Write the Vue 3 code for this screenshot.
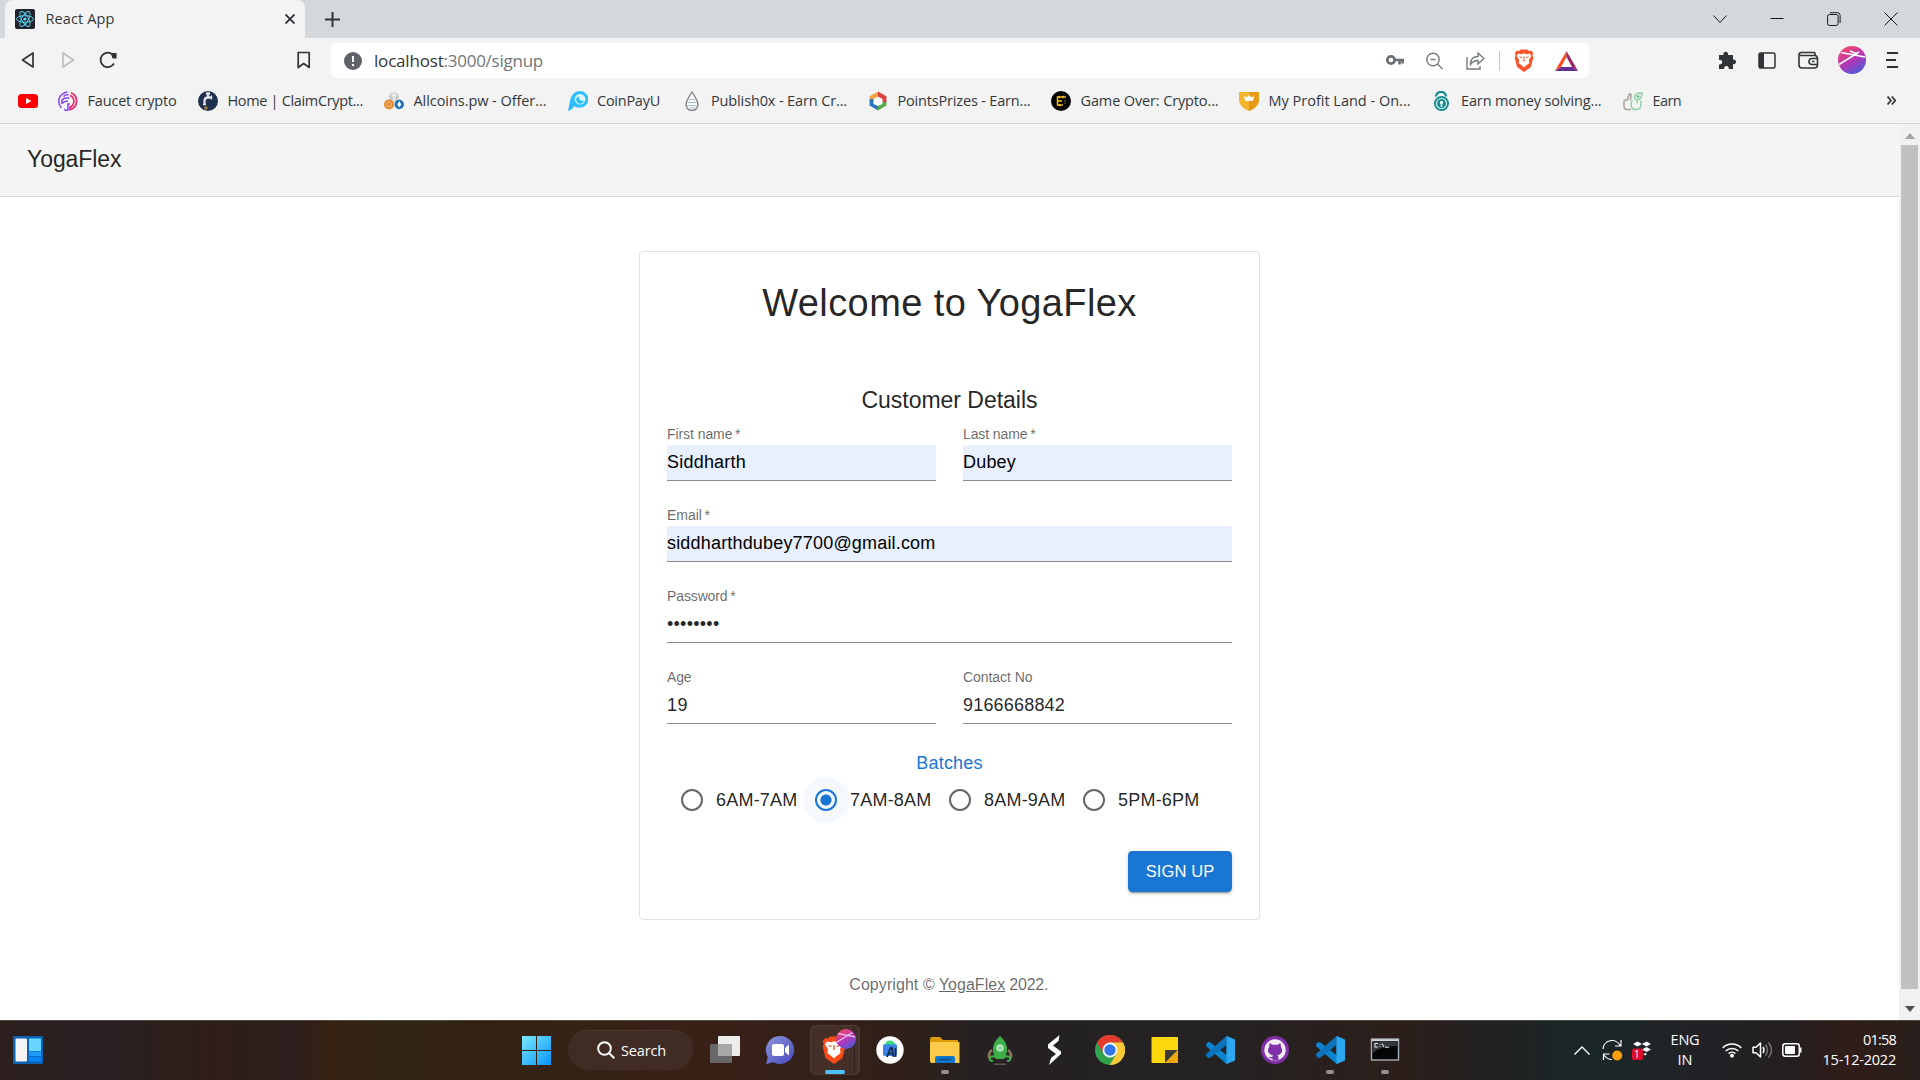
<script setup>
const vFit = {
  mounted(el, { value }) {
    const natural = el.getBoundingClientRect().width
    el.style.letterSpacing = (value - natural) / el.textContent.length + 'px'
  },
}

const bookmarks = [
  { label: '', w: 0, end: 20, art: '<rect x="0" y="3" width="20" height="14" rx="3.5" fill="#f00"/><path d="M8 7l5.4 3L8 13z" fill="#fff"/>' },
  { label: 'Faucet crypto', w: 89, end: 21.5, art: '<path d="M9.500 1Q3 2 1 8q-1 5 2.500 9M6 18.500q2 1 4 .5v-6h2M5.500 5.500Q7 3.800 9.500 3.800h1M4 9q1.500-2 4.500-2h3M4 12.500q1.500-2.200 4.500-2.200h1.500M4 9v4" fill="none" stroke="#8446f5" stroke-width="1.500"/><path d="M13 1.800A9 9 0 0 1 12 18.800V16A6.200 6.200 0 0 0 12 4.500" fill="none" stroke="#f01f66" stroke-width="1.600"/>' },
  { label: 'Home | ClaimCrypt...', w: 135.5, end: 21, art: '<circle cx="10" cy="10" r="10" fill="#20304f"/><path d="M10 2.500V6M8 2.500h4M6.500 14V10.500q0-4 3.500-4h3.500" stroke="#dfe5ec" stroke-width="2.300" fill="none"/><path d="M13.500 4.500v4M5 13.500h3" stroke="#dfe5ec" stroke-width="1.300"/><circle cx="8" cy="17" r="1.700" fill="#a5843a"/>' },
  { label: 'Allcoins.pw - Offer...', w: 133, end: 21, art: '<circle cx="10" cy="6.500" r="5" fill="#ccc"/><path d="M10 3v7M8 5l2-2 2 2" stroke="#f4f4f4" stroke-width="1.300" fill="none"/><circle cx="5" cy="13.500" r="5" fill="#e48a32"/><circle cx="5" cy="13.500" r="2.400" fill="none" stroke="#f6c28e"/><circle cx="15.300" cy="13.500" r="4.700" fill="#1e70b8"/><path d="M15.300 10l2 3.500-2 3-2-3z" fill="#fff"/>' },
  { label: 'CoinPayU', w: 63, end: 21.5, art: '<path d="M0 20l2-10Q4 0 12 0a8.300 8.300 0 0 1 0 16.600Q8.500 17 6 15q-1.500 4-6 5z" fill="#2bc0fb"/><circle cx="12" cy="8.200" r="5.300" fill="#e4f7ff"/><path d="M10.500 5a4 4 0 1 0 5.500 4.500Q11 11 10.500 5z" fill="#2bc0fb"/>' },
  { label: 'Publish0x - Earn Cr...', w: 136, end: 21, art: '<path d="M10 1Q4 10 4 13.500a6 6 0 0 0 12 0Q16 10 10 1z" fill="#f8f8f8" stroke="#777d80" stroke-width="1.300"/><path d="M7 8.500h6M5 11.500h10M5 14.500h10M8 17h5" stroke="#a7c3d2"/>' },
  { label: 'PointsPrizes - Earn...', w: 133, end: 20.5, art: '<path d="M10 0l9 5v10l-9 5-9-5V5z" fill="#fff"/><path d="M10 .5v5L5.500 8H1.500V5.300z" fill="#f0a43c"/><path d="M10 .5v5L14.500 8v3h4V5.300z" fill="#d94242"/><path d="M18.500 11h-4v2L10 15v4.500l8.500-5z" fill="#57ab46"/><path d="M1.500 8h4v5l4.500 2v4.500l-8.500-5z" fill="#2b76bb"/>' },
  { label: 'Game Over: Crypto...', w: 138, end: 20.5, art: '<circle cx="10" cy="10" r="10" fill="#000"/><path d="M15 6H6.500v8H12M6.500 10H11M8.500 4.800v2.500M12 4.800v2.500M8.500 13v2.200" fill="none" stroke="#f5bd1c" stroke-width="1.500"/><path d="M14 9v5" stroke="#695010" stroke-width="1.500" stroke-dasharray="1.500 1"/>' },
  { label: 'My Profit Land - On...', w: 142, end: 21, art: '<path d="M0 1q10 0 20 0v8q0 7-10 11Q0 16 0 9z" fill="#f5b52b"/><path d="M10 1h10v8q0 7-10 11z" fill="#e59b16"/><path d="M5 5l2.500 1.500L10 4l2.500 2.500L15 5l-1 5H6z" fill="#fff"/>' },
  { label: 'Earn money solving...', w: 140.5, end: 21.5, art: '<path d="M4 5.500Q4.500 1 9 1t5 4.500" fill="none" stroke="#168b8f" stroke-width="2.200"/><circle cx="9.500" cy="12.500" r="7.500" fill="#168b8f"/><circle cx="9.500" cy="12.500" r="5" fill="none" stroke="#e6f5f5" stroke-width="1.100"/><circle cx="9.500" cy="11.400" r="1.700" fill="#e6f5f5"/><path d="M8.700 12h1.600v4H8.700z" fill="#e6f5f5"/>' },
  { label: 'Earn', w: 28.5, end: 0, art: '<path d="M1 10q2-2 3.500-1L6 3.500q2-2 2 1.500l-.500 4M1 10v6q1 3 4 2.500h3" fill="none" stroke="#a9a29c" stroke-width="1.500"/><path d="M19 2q-6-.500-7.500 3.500 0 3.500 3 3.500Q19 8 19 2zM9.500 9q-2 2-1 7 1 3 5 2.500 4 0 4.500-5V9.500M14 9v3" fill="none" stroke="#8fd0a8" stroke-width="1.500"/><circle cx="15" cy="5.500" r="1.500" fill="#6dbf8e"/>' },
]

const vscode = '<path d="M21.500 1L29 4.500v21L21.500 29 1.500 11.500q-1.500-1.500 0-3L3 7.300q1.200-.8 2.500.2L21.500 20z" fill="#0a84d0"/><path d="M21.500 1L1.500 18.500q-1.500 1.500 0 3l1.500 1.200q1.200.8 2.500-.2L21.500 10z" fill="#0b72bb"/><path d="M21.500 1L30 4.500v21L21.500 29z" fill="#2aa7ee"/>'
const lion = 'M10 .5h8l2 2 3-.3 2.300 3-1 2.500 1 3-2.800 11.300L14 28l-8.500-6L2.700 10.700l1-3-1-2.500 2.300-3 3 .3z'
const face = 'M7 5.500l4 .800 3-1 3 1 4-.800 2 3-3 4.500.5 4-3 2.500-3.500 1-3.500-1-3-2.500.5-4L5 8.500z'

const apps = [
  { name: 'task-view', art: '<rect x="0" y="9" width="22" height="19" rx="1.500" fill="#686868"/><rect x="8" y="1" width="22" height="20" rx="1" fill="#ededed"/><rect x="8" y="9" width="14" height="12" fill="#a8a8a8"/>' },
  { name: 'chat', art: '<path d="M15 1a14 14 0 1 1-6.500 26.300L1 29l1.800-7A14 14 0 0 1 15 1z" fill="url(#chatFill)"/><rect x="7" y="9" width="12" height="12" rx="2" fill="#fff"/><path d="M20 13l4-3.500v11L20 17z" fill="#fff"/>' },
  { name: 'brave', active: true, art: `<path d="${lion}" fill="#fb4b1a"/><path d="${face}M12 13h4l-2 4z" fill="#fff"/><path d="M11 19.500l3-1 3 1-3 3z" fill="#fff"/><path d="M8.500 9.500l3 1M19.500 9.500l-3 1M14 9v5" stroke="#fb4b1a" stroke-width="1.300"/>` },
  { name: 'android-studio', art: '<circle cx="15" cy="15" r="13.700" fill="#fff"/><rect x="8" y="9" width="14" height="12" rx="2" fill="#3b82e8"/><path d="M10 9.500a5 4 0 0 1 10 0z" fill="#3ddc84"/><path d="M12 22l3.500-9h1.500l1.500 9M13.500 18.500h4M20.500 13v9" fill="none" stroke="#10253f" stroke-width="1.700"/>' },
  { name: 'files', run: true, art: '<path d="M0 4q0-2 2-2h8l3 3h15v6H0z" fill="#dd9b07"/><path d="M0 8q0-1 1-1h28.500v21H2q-2 0-2-2z" fill="#fdcb49"/><path d="M5 28v-5q0-2 2-2h16q2 0 2 2v5z" fill="#1277c9"/><path d="M9 24.500h12" stroke="#0b4c86" stroke-width="1.500"/>' },
  { name: 'rocket', art: '<path d="M7 15Q2 19 5 24M23 15q5 4 2 9" fill="none" stroke="#8b775c" stroke-width="2.500"/><path d="M15 1Q8 7 8 14q0 6 3 10h8q3-4 3-10 0-7-7-13z" fill="#3eaf48"/><circle cx="15" cy="13" r="3.200" fill="#92d8a5" stroke="#e1f5e5"/><path d="M10 22q-4-2-5 1t3 3M20 22q4-2 5 1t-3 3" fill="none" stroke="#3eaf48" stroke-width="2"/><path d="M9 29.200h12" stroke="#625750" stroke-width="1.500"/>' },
  { name: 'slash', art: '<path d="M19.500 0L8 9.500V13l8 6-5 4-2 7 12-11v-2.500l-8-6 5.500-4.500z" fill="#fff"/>' },
  { name: 'chrome', art: '<circle cx="15" cy="15" r="15" fill="#2ea44f"/><path d="M2 7.500A15 15 0 0 1 28 7.500H15L8.500 18.700z" fill="#e33b2e"/><path d="M28 7.500A15 15 0 0 1 14.700 30l6.800-11.200L15 7.500z" fill="#fcc934"/><circle cx="15" cy="15" r="7.400" fill="#fff"/><circle cx="15" cy="15" r="5.700" fill="#3076e8"/>' },
  { name: 'notes', art: '<rect x="1.500" y="2" width="26.500" height="26" rx="1" fill="#fed80c"/><path d="M15 28V15h13z" fill="#3f3a36"/><path d="M15 28L28 15v13z" fill="#f1a80d"/>' },
  { name: 'vscode', art: vscode },
  { name: 'github', art: '<circle cx="15" cy="15" r="14" fill="#8030a8"/><circle cx="15" cy="15" r="10.700" fill="#f2ecf5"/><path d="M9.500 8l3 1.700h5l3-1.700.500 4q3 5-1.500 7.500l-2 .800q1 1 1 2.500v2.800h-6v-2q-3 0-4-2.200 2 1.200 4 .4l.500-1.500q-5-1-5-5 0-2 1.200-3.300z" fill="#8030a8"/>' },
  { name: 'vscode-2', run: true, art: vscode },
  { name: 'terminal', run: true, art: '<rect x="1.500" y="4" width="27" height="21" fill="#050505" stroke="#a5adb2" stroke-width="1.400"/><path d="M1.500 5.200h27" stroke="#d0d6da" stroke-width="2"/><path d="M2.500 7h25v4Q10 11 3 18z" fill="#34383a"/><path d="M8 8.500H5v3.500h3M10 9.200v.8M10 11.200v.8M12 8.500l2 3.500M15 12.200h4" fill="none" stroke="#dce1e3" stroke-width="1.100"/>' },
]

const fieldRows = [
  [{ label: 'First name\u2009*', lw: 73.5, value: 'Siddharth', w: 79, filled: true }, { label: 'Last name\u2009*', lw: 72.5, value: 'Dubey', w: 53, filled: true }],
  [{ label: 'Email\u2009*', lw: 43, value: 'siddharthdubey7700@gmail.com', w: 268.5, filled: true }],
  [{ label: 'Password\u2009*', lw: 68.5, value: '••••••••', w: 52.5 }],
  [{ label: 'Age', lw: 24.5, value: '19', w: 21 }, { label: 'Contact No', lw: 69.5, value: '9166668842', w: 102 }],
]
const batches = ['6AM-7AM', '7AM-8AM', '8AM-9AM', '5PM-6PM']
const chosen = '7AM-8AM'
</script>

<template>
  <div class="desktop">
    <svg class="defs" width="0" height="0">
      <defs>
        <linearGradient id="chatFill" x1="0" y1="0" x2="1" y2="1"><stop offset="0" stop-color="#8d97dd" /><stop offset="1" stop-color="#4747ba" /></linearGradient>
        <linearGradient id="orb" x1=".2" y1="0" x2=".8" y2="1"><stop offset="0" stop-color="#f64a68" /><stop offset=".5" stop-color="#b636b4" /><stop offset="1" stop-color="#425de0" /></linearGradient>
        <linearGradient id="winFill" gradientUnits="userSpaceOnUse" x1="0" y1="0" x2="29" y2="29"><stop offset="0" stop-color="#79e7ff" /><stop offset="1" stop-color="#0894f8" /></linearGradient>
      </defs>
    </svg>

    <header class="tabs">
      <div class="tab">
        <svg width="20" height="20" viewBox="0 0 20 20"><rect width="20" height="20" rx="2" fill="#20232a" /><g fill="none" stroke="#61dafb" stroke-width=".9"><ellipse cx="10" cy="10" rx="8.500" ry="3.300" /><ellipse cx="10" cy="10" rx="8.500" ry="3.300" transform="rotate(60 10 10)" /><ellipse cx="10" cy="10" rx="8.500" ry="3.300" transform="rotate(120 10 10)" /></g><circle cx="10" cy="10" r="1.600" fill="#61dafb" /></svg>
        <span class="tab-title"><span v-fit="69">React App</span></span>
        <svg class="tab-close" width="10" height="10" viewBox="0 0 10 10"><path d="M.5.5l9 9M9.500.5l-9 9" stroke="#2b2f33" stroke-width="1.800" /></svg>
      </div>
      <svg class="new-tab" width="15" height="15" viewBox="0 0 15 15"><path d="M7.500 0v15M0 7.500h15" stroke="#303437" stroke-width="2" /></svg>
      <div class="window-buttons">
        <svg width="14" height="14" viewBox="0 0 14 14"><path d="M.5 3.500l6.500 7 6.500-7" /></svg>
        <svg width="14" height="14" viewBox="0 0 14 14"><path d="M.5 6.500h13" /></svg>
        <svg width="14" height="14" viewBox="0 0 14 14"><rect x=".6" y="2.500" width="10.500" height="11" rx="2" /><path d="M3 .7h7.500q2.600 0 2.600 2.600V11" /></svg>
        <svg width="14" height="14" viewBox="0 0 14 14"><path d="M.5.5l13 13M13.500.5l-13 13" /></svg>
      </div>
    </header>

    <nav class="toolbar">
      <div class="nav-left">
        <svg class="back" width="14" height="18" viewBox="0 0 14 18"><path d="M12 2v14L1.500 9z" fill="none" stroke="#303437" stroke-width="1.700" stroke-linejoin="round" /></svg>
        <svg class="fwd" width="14" height="18" viewBox="0 0 14 18"><path d="M2 2v14l10.500-7z" fill="none" stroke="#bcbfc1" stroke-width="1.700" stroke-linejoin="round" /></svg>
        <svg class="reload" width="18" height="18" viewBox="0 0 18 18"><path d="M15 12.500A7.200 7.200 0 1 1 13.500 3.500" fill="none" stroke="#303437" stroke-width="1.800" /><path d="M12.500 2.500h4.500v4.500h-3z" fill="#303437" stroke="#303437" stroke-linejoin="round" stroke-width="1.200" /></svg>
        <svg class="save" width="14" height="18" viewBox="0 0 14 18"><path d="M1.200 1.500h11v15L6.700 12.500l-5.500 4z" fill="none" stroke="#303437" stroke-width="1.700" stroke-linejoin="round" /></svg>
      </div>
      <div class="address">
        <svg width="18" height="18" viewBox="0 0 18 18"><circle cx="9" cy="9" r="9" fill="#5f6368" /><path d="M9 4v6" stroke="#fff" stroke-width="2" /><circle cx="9" cy="13" r="1.200" fill="#fff" /></svg>
        <span class="url"><span v-fit="69.500" class="host">localhost</span><span v-fit="99.500">:3000/signup</span></span>
        <div class="address-icons">
          <svg class="key" width="18" height="12" viewBox="0 0 18 12"><circle cx="5" cy="6" r="3.700" fill="none" stroke="#6b6f73" stroke-width="2.700" /><path d="M8 6h10M13.500 6v4.500M16.500 6v3.500" stroke="#6b6f73" stroke-width="2.600" /></svg>
          <svg width="17" height="18" viewBox="0 0 17 18"><g fill="none" stroke="#777b7e" stroke-width="1.400"><circle cx="7" cy="7.500" r="6.200" /><path d="M4.500 7.500h5M11.500 12l5 5" /></g></svg>
          <svg width="19" height="19" viewBox="0 0 19 19"><path d="M1 6v12h13v-3M4.500 13.500q0-8 7.500-8V2l6 5.500-6 5.500V9.500q-4.500 0-7.500 4z" fill="none" stroke="#777b7e" stroke-width="1.400" /></svg>
          <i class="divider"></i>
          <svg class="shield" width="20" height="23" viewBox="2 0 24 28"><path :d="lion" fill="#fb542b" /><path :d="face" fill="#fff" /><path d="M11 19.500l3-1 3 1-3 3z" fill="#fff" /><path d="M8.500 9.500l3 1M19.500 9.500l-3 1M14 9v4.500M12.500 14.500h3" stroke="#fb542b" stroke-width="1.200" /></svg>
          <svg class="bat" width="23" height="20" viewBox="0 0 23 20"><path d="M11.500 0L0 20l6-4 5.500-10z" fill="#ff4a1c" /><path d="M11.500 0L23 20l-6-4-5.500-10z" fill="#9e1f63" /><path d="M0 20h23l-6-4H6z" fill="#662d91" /></svg>
        </div>
      </div>
      <div class="nav-right">
        <svg width="19" height="19" viewBox="0 0 19 19"><path d="M1 4h4.500a2.400 2.400 0 1 1 4.500 0h5v4.500a2.400 2.400 0 1 1 0 4.600v5h-4.300a2.400 2.400 0 1 0-4.600 0H1v-4.700a2.400 2.400 0 1 0 0-4.500z" fill="#303437" /></svg>
        <svg width="18" height="17" viewBox="0 0 18 17"><rect x="1" y="1" width="16" height="15" rx="1.500" fill="none" stroke="#303437" stroke-width="1.500" /><path d="M1 1h5v15H1z" fill="#303437" /></svg>
        <svg width="21" height="18" viewBox="0 0 21 18"><path d="M17 4.500V2.500q0-1-1-1H3.500Q1 1.500 1 4v10q0 3 3 3h12.500q3 0 3-3V7.500q0-3-3-3H2M20 7.500h-6a3 3 0 0 0 0 6h6" fill="none" stroke="#303437" stroke-width="1.600" /><path d="M14 10.500h2.500" stroke="#303437" stroke-width="1.500" /></svg>
        <svg width="28" height="28" viewBox="0 0 28 28"><circle cx="14" cy="14" r="14" fill="url(#orb)" /><path d="M1 18.500L21 6M3 6.500l24 4.500M12 5l7 3" stroke="#fff" stroke-width="1.500" /></svg>
        <svg width="12" height="16" viewBox="0 0 12 16"><path d="M1 1h11M0 8h10M1 15h11" stroke="#303437" stroke-width="1.800" /></svg>
      </div>
    </nav>

    <div class="bookmarks">
      <div v-for="b in bookmarks" :key="b.label" class="bookmark" :style="{ marginRight: b.end + 'px' }">
        <svg width="20" height="20" viewBox="0 0 20 20" v-html="b.art"></svg>
        <span v-if="b.label" class="bm-text" :style="{ width: b.w + 'px' }"><span v-fit="b.w">{{ b.label }}</span></span>
      </div>
      <svg class="more" width="9" height="9" viewBox="0 0 9 9"><path d="M.5.5l3.500 4-3.500 4M4.800.5l3.500 4-3.500 4" fill="none" stroke="#303437" stroke-width="1.700" /></svg>
    </div>

    <main class="viewport">
      <div class="page">
        <div class="appbar"><span v-fit="94.500">YogaFlex</span></div>
        <section class="card">
          <h1><span v-fit="374.500">Welcome to YogaFlex</span></h1>
          <h2><span v-fit="176">Customer Details</span></h2>
          <div v-for="(row, i) in fieldRows" :key="i" class="row">
            <div v-for="f in row" :key="f.label" class="field">
              <label><span v-fit="f.lw">{{ f.label }}</span></label>
              <div class="input" :class="{ filled: f.filled }"><span v-fit="f.w">{{ f.value }}</span></div>
            </div>
          </div>
          <div class="batches-title"><span v-fit="66.500">Batches</span></div>
          <div class="radios">
            <div v-for="b in batches" :key="b" class="radio">
              <i class="halo" :class="{ on: b === chosen }"><i class="ring"></i></i>
              <span v-fit="81.500">{{ b }}</span>
            </div>
          </div>
          <div class="actions"><button><span v-fit="68.500">SIGN UP</span></button></div>
        </section>
        <footer><span v-fit="85.500">Copyright ©</span><span class="gap"></span><u v-fit="66.500">YogaFlex</u><span class="gap"></span><span v-fit="39">2022.</span></footer>
      </div>
      <div class="scrollbar">
        <svg width="10" height="6" viewBox="0 0 10 6"><path d="M0 6l5-6 5 6z" fill="#a3a3a3" /></svg>
        <i class="thumb"></i>
        <svg width="10" height="6" viewBox="0 0 10 6"><path d="M0 0l5 6 5-6z" fill="#505050" /></svg>
      </div>
    </main>

    <div class="taskbar">
      <svg class="widgets" width="30" height="28" viewBox="0 0 30 28"><rect width="30" height="28" rx="1" fill="#0b62b5" /><rect x="2.500" y="2.500" width="11.500" height="23" rx="1" fill="#f4f4f4" /><rect x="16" y="2.500" width="12" height="12.500" fill="#66d6ff" /><rect x="16" y="15.500" width="12" height="4.500" fill="#1c9cf6" /><rect x="16" y="20.700" width="12" height="4.800" fill="#0985ef" /></svg>
      <svg class="start" width="29" height="29" viewBox="0 0 29 29"><path d="M0 0h14v14H0zM15 0h14v14H15zM0 15h14v14H0zM15 15h14v14H15z" fill="url(#winFill)" /></svg>
      <div class="search">
        <svg width="18" height="18" viewBox="0 0 18 18"><circle cx="7.500" cy="7.500" r="6.300" fill="none" stroke="#fff" stroke-width="1.900" /><path d="M12 12l5.300 5.300" stroke="#fff" stroke-width="2" /></svg>
        <span v-fit="45">Search</span>
      </div>
      <div class="apps">
        <div v-for="a in apps" :key="a.name" class="app" :class="{ active: a.active, run: a.run }">
          <svg :width="a.active ? 26 : 30" :height="30" :viewBox="a.active ? '1 -1 26 30' : '0 0 30 30'" v-html="a.art"></svg>
          <svg v-if="a.active" class="profile" width="20" height="20" viewBox="0 0 28 28"><circle cx="14" cy="14" r="14" fill="url(#orb)" /><path d="M1 18.500L23 5M3 6.500l24 4.500" stroke="#e8c6ee" stroke-width="1.700" /></svg>
        </div>
      </div>
      <div class="tray">
        <svg class="up" width="16" height="9" viewBox="0 0 16 9"><path d="M.5 8.500L8 1l7.500 7.500" fill="none" stroke="#fff" stroke-width="1.400" /></svg>
        <svg class="sync" width="21" height="21" viewBox="0 0 21 21"><path d="M1 9A9 9 0 0 1 18 5.500M19 0v6h-6M1.500 20v-6h6M2 15q3 4.500 8 4.500" fill="none" stroke="#fff" stroke-width="1.200" /><circle cx="15.200" cy="15.500" r="5" fill="#ff9d0a" /></svg>
        <svg class="drop" width="20" height="19" viewBox="0 0 20 19"><path d="M1 3l4.500-2.500L10 3 5.500 5.500zM10 3l4.500-2.500L19 3l-4.500 2.500zM10 8.500L14.500 6 19 8.500 14.500 11zM11.500 13l2-1 1.500 1-2 1.500z" fill="#fff" /><rect x="0" y="7.500" width="11" height="11.500" rx="2" fill="#dd0d2d" /></svg>
        <span class="badge">1</span>
        <div class="lang"><span v-fit="29">ENG</span><span>IN</span></div>
        <svg class="wifi" width="20" height="16" viewBox="0 0 20 16"><g fill="none" stroke="#fff" stroke-width="1.500"><path d="M.7 6a13 13 0 0 1 18.600 0M3.700 9a9 9 0 0 1 12.600 0M6.600 11.600a5 5 0 0 1 6.800 0" /></g><circle cx="10" cy="13.700" r="1.900" fill="#fff" /></svg>
        <svg class="sound" width="21" height="18" viewBox="0 0 21 18"><path d="M1 6.300h3L8.500 2v14L4 11.700H1z" fill="none" stroke="#fff" stroke-width="1.500" stroke-linejoin="round" /><path d="M11 6q2 3 0 6" fill="none" stroke="#fff" stroke-width="1.500" /><path d="M13.500 3.500q4 5.500 0 11M16.500 1.500q6 7.500 0 15" fill="none" stroke="#77777a" stroke-width="1.400" /></svg>
        <svg class="battery" width="20" height="14" viewBox="0 0 20 14"><rect x=".8" y=".8" width="16.500" height="12.400" rx="2.500" fill="none" stroke="#fff" stroke-width="1.500" /><rect x="3" y="3" width="10" height="8" rx="1" fill="#fff" /><path d="M18.500 4.500v5" stroke="#fff" stroke-width="2" /></svg>
        <div class="clock"><span v-fit="33">01:58</span><span v-fit="73.500">15-12-2022</span></div>
      </div>
    </div>
  </div>
</template>

<style>
body { margin: 0; overflow: hidden; }
</style>

<style scoped>
* { box-sizing: border-box; }
svg { display: block; flex: none; }
.defs { position: absolute; }
.desktop { width: 1920px; height: 1080px; display: flex; flex-direction: column; background: #fff; font-family: "Open Sans", sans-serif; font-size: 14.5px; color: #33383c; white-space: nowrap; overflow: hidden; }

.tabs { height: 38px; flex: none; background: #d4d8db; display: flex; align-items: center; padding-left: 5px; }
.tab { width: 300px; height: 38px; background: #f3f3f3; border-radius: 8px 8px 0 0; display: flex; align-items: center; padding: 0 10px; }
.tab-title { margin-left: 10.5px; flex: 1; padding-bottom: 2px; }
.new-tab { margin-left: 20px; }
.window-buttons { margin-left: auto; margin-right: 22px; display: flex; gap: 43px; fill: none; stroke: #16191b; stroke-width: 1; }

.toolbar { height: 44px; flex: none; background: #f3f3f3; display: flex; align-items: center; }
.nav-left { width: 331px; flex: none; display: flex; align-items: center; }
.back { margin-left: 21px; }
.fwd { margin-left: 26px; }
.reload { margin-left: 24px; }
.save { margin-left: 180px; }
.address { width: 1258px; height: 35px; margin-top: 1px; background: #fff; border-radius: 5px; display: flex; align-items: center; padding-left: 13px; }
.url { margin-left: 12px; font-size: 17px; color: #72767a; display: flex; }
.host { color: #33373a; }
.address-icons { display: flex; align-items: center; margin-left: auto; margin-right: 11.500px; gap: 22.500px; }
.key { margin-bottom: 1px; }
.divider { width: 1px; height: 20px; background: #c4c6c8; margin-left: -8.500px; }
.shield { margin-left: -8.500px; }
.bat { margin-left: -1.500px; }
.nav-right { display: flex; align-items: center; margin-left: 129px; gap: 22px; }
.nav-right svg:nth-child(2) { margin-left: -1px; }
.nav-right svg:nth-child(4) { margin-left: -3px; margin-right: -2px; }

.bookmarks { height: 42px; flex: none; background: #f3f3f3; border-bottom: 1px solid #d2d3d4; display: flex; align-items: center; padding: 0 24px 4px 18px; }
.bookmark { display: flex; align-items: center; gap: 9.5px; flex: none; }
.bm-text { display: block; }
.more { margin-left: auto; }

.viewport { height: 896px; flex: none; display: flex; font-family: "Liberation Sans", Arial, sans-serif; color: rgba(0, 0, 0, .87); }
.page { width: 1899px; display: flex; flex-direction: column; align-items: center; }
.appbar { width: 100%; height: 73px; flex: none; background: #f5f5f5; border-bottom: 1px solid #d5d5d5; padding: 0 27px; font-size: 23px; line-height: 71px; }
.card { width: 621px; height: 669px; margin-top: 54px; flex: none; border: 1px solid #e0e0e0; border-radius: 4px; padding: 27px; display: flex; flex-direction: column; }
h1 { margin: 0; font-weight: 400; font-size: 38px; line-height: 49px; text-align: center; }
h2 { margin: 55px 0 8px; font-weight: 400; font-size: 23px; line-height: 35px; text-align: center; }
.row { display: flex; gap: 27px; height: 81px; flex: none; }
.field { flex: 1; }
label { display: block; height: 19px; line-height: 16px; font-size: 14px; color: rgba(0, 0, 0, .6); }
.input { height: 36px; line-height: 35px; font-size: 18px; border-bottom: 1px solid #8c8c8c; }
.filled { background: #e8f0fe; color: #000; }
.batches-title { height: 26px; line-height: 24px; margin-top: 1px; text-align: center; color: #1976d2; font-size: 18px; }
.radios { display: flex; height: 46px; padding-left: 2px; align-items: center; }
.radio { width: 134px; display: flex; align-items: center; font-size: 18px; }
.halo { width: 46px; height: 46px; flex: none; border-radius: 50%; display: grid; place-items: center; }
.ring { width: 22px; height: 22px; border: 2px solid #666; border-radius: 50%; }
.halo.on { background: #f5f9fd; }
.on .ring { border-color: #1976d2; background: radial-gradient(circle, #1976d2 5.2px, transparent 5.900px); }
.radio span { margin-left: 1px; }
.actions { display: flex; justify-content: flex-end; margin-top: 28px; }
button { width: 104px; height: 41px; border: 0; border-radius: 4.400px; background: #1976d2; color: #fff; font: 16.500px "Liberation Sans", Arial, sans-serif; padding: 0; box-shadow: 0 3px 1px -2px rgba(0,0,0,.2), 0 2px 2px rgba(0,0,0,.14), 0 1px 5px rgba(0,0,0,.12); }
footer { margin: 53px 1.500px 0 0; font-size: 16px; line-height: 24px; color: rgba(0, 0, 0, .6); display: flex; }
.gap { width: 4px; }

.scrollbar { width: 21px; background: #f1f1f1; display: flex; flex-direction: column; align-items: center; padding: 9px 0 8px; }
.thumb { width: 17px; height: 844px; margin: 6px 0 auto; background: #c1c1c1; }

.taskbar { height: 60px; flex: none; border-top: 1px solid #4a4943; padding-bottom: 1px; display: flex; align-items: center; color: #fff; background: linear-gradient(90deg, #2c1f1e 0, #292021 110px, #2f1e18 210px, #2d1f1e 290px, #372212 330px, #322514 385px, #332214 480px, #392117 700px, #302019 900px, #252122 980px, #242222 1220px, #2c1f1b 1400px, #222222 1490px, #1a2628 1590px, #222226 1700px, #241f20 1790px, #301c18 1850px, #281f1c 1920px); }
.widgets { margin-left: 13px; }
.start { margin-left: 479px; }
.search { width: 125px; height: 40px; margin-left: 17px; border-radius: 20px; background: #412c23; border-top: 1px solid #4b372e; display: flex; align-items: center; padding: 0 0 1px 29px; gap: 6px; font-size: 14.500px; }
.apps { display: flex; margin-left: 4.500px; }
.app { width: 55px; height: 50px; display: flex; align-items: center; justify-content: center; position: relative; }
.active { width: 50px; margin: 0 2.500px; border-radius: 5px; background: #443028; border: 1px solid #503c33; padding-right: 2px; }
.active::before { content: ""; position: absolute; right: 4px; top: 0; height: 48px; width: 4px; border-right: 1px solid #2f2019; border-radius: 5px; }
.profile { position: absolute; right: 3px; top: 3px; }
.run::after, .active::after { content: ""; position: absolute; bottom: 1px; width: 8px; height: 4px; border-radius: 2px; background: #96918f; left: 23px; }
.active::after { width: 20px; bottom: 0; background: #4cc2ff; left: 14px; }
.tray { margin-left: auto; margin-right: 24px; display: flex; align-items: center; font-size: 14.500px; line-height: 20px; }
.sync { margin-left: 12px; }
.drop { margin-left: 9px; }
.badge { width: 0; font-size: 10px; line-height: 12px; text-indent: -17.500px; padding-top: 7px; }
.lang { width: 30px; margin-left: 18.500px; display: flex; flex-direction: column; align-items: center; }
.wifi { margin-left: 22px; }
.sound { margin-left: 10px; }
.battery { margin-left: 9px; }
.clock { width: 74px; margin-left: 20px; display: flex; flex-direction: column; align-items: flex-end; padding-bottom: 1px; }
</style>
